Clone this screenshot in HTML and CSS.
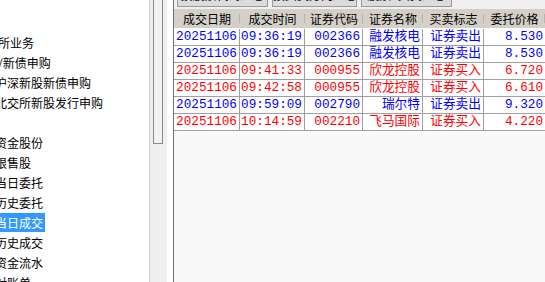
FILE: index.html
```html
<!DOCTYPE html>
<html lang="zh-CN">
<head>
<meta charset="UTF-8" />
<title>当日成交</title>
<link rel="stylesheet" href="styles.css">
</head>
<body>
<div class="app">
  <div class="nav">
    <div class="tree">
      <div class="node">北交所业务</div>
      <div class="node">新股/新债申购</div>
      <div class="node child">沪深新股新债申购</div>
      <div class="node child">北交所新股发行申购</div>
      <div class="node child"></div>
      <div class="node child">资金股份</div>
      <div class="node child">限售股</div>
      <div class="node child">当日委托</div>
      <div class="node child">历史委托</div>
      <div class="node child"><span class="selected">当日成交</span></div>
      <div class="node child">历史成交</div>
      <div class="node child">资金流水</div>
      <div class="node child">对账单</div>
    </div>
    <div class="vscroll"><div class="thumb"></div></div>
  </div>
  <div class="gap"></div>
  <div class="main">
    <div class="toolbar">
      <button class="tb-btn w91">按股票代码汇总</button>
      <button class="tb-btn w85">按买卖方向汇总</button>
      <button class="tb-btn w91">股票+买卖汇总</button>
    </div>
    <table class="grid">
      <colgroup>
        <col style="width:66px"><col style="width:65px"><col style="width:58px">
        <col style="width:60px"><col style="width:61px"><col style="width:61px">
      </colgroup>
      <thead>
        <tr>
          <th>成交日期</th>
          <th>成交时间</th>
          <th>证券代码</th>
          <th>证券名称</th>
          <th>买卖标志</th>
          <th>委托价格</th>
        </tr>
      </thead>
      <tbody id="tradeBody"></tbody>
    </table>
  </div>
</div>

<script>
  const trades = [
    ['20251106', '09:36:19', '002366', '融发核电', '证券卖出', '8.530'],
    ['20251106', '09:36:19', '002366', '融发核电', '证券卖出', '8.530'],
    ['20251106', '09:41:33', '000955', '欣龙控股', '证券买入', '6.720'],
    ['20251106', '09:42:58', '000955', '欣龙控股', '证券买入', '6.610'],
    ['20251106', '09:59:09', '002790', '瑞尔特', '证券卖出', '9.320'],
    ['20251106', '10:14:59', '002210', '飞马国际', '证券买入', '4.220']
  ];
  const body = document.getElementById('tradeBody');
  trades.forEach(t => {
    const cls = t[4] === '证券买入' ? 'buy' : 'sell';
    body.insertAdjacentHTML('beforeend',
      `<tr class="${cls}">${t.map(v => `<td>${v}</td>`).join('')}</tr>`);
  });
</script>
</body>
</html>
```

FILE: styles.css
```css
html, body {
  margin: 0;
  height: 100%;
  overflow: hidden;
  background: #fff;
}
.app {
  display: flex;
  height: 282px;
  font-family: "Noto Sans CJK SC", sans-serif;
  font-size: 12px;
}
.nav {
  display: flex;
  width: 167px;
  flex-shrink: 0;
}
.tree {
  width: 149px;
  overflow: hidden;
  background: #fff;
  padding-top: 33px;
  box-sizing: border-box;
}
.node {
  height: 20px;
  line-height: 20px;
  margin-left: -26px;
  white-space: nowrap;
  color: #000;
}
.node.child {
  margin-left: -5px;
}
.selected {
  display: inline-block;
  height: 19px;
  line-height: 19px;
  background: #3399ff;
  color: #fff;
  padding-right: 2px;
}
.vscroll {
  width: 18px;
  border-left: 1px solid #d0d0d0;
  background: #f0efee;
  box-sizing: border-box;
}
.thumb {
  margin-left: 3px;
  width: 10px;
  height: 144px;
  border: 1px solid #8a8a8a;
  border-top: none;
  background: #f3f3f3;
  box-sizing: border-box;
}
.gap {
  width: 6px;
  background: #fff;
}
.main {
  flex: 1;
  border-left: 1px solid #707070;
  background: #f9f9f9;
  overflow: hidden;
}
.toolbar {
  height: 9px;
  display: flex;
  gap: 4px;
  padding-left: 3px;
  background: #f0f0f0;
  align-items: flex-end;
  overflow: hidden;
}
.tb-btn {
  height: 20px;
  margin-bottom: 2px;
  padding: 0 0 5px;
  border: 1px solid #9a9a9a;
  background: #dcdcdc;
  font-family: "Noto Sans CJK SC", sans-serif;
  font-size: 12px;
  line-height: 12px;
  color: #000;
  flex-shrink: 0;
  overflow: hidden;
  white-space: nowrap;
}
.w91 { width: 91px; }
.w85 { width: 85px; }
.grid {
  table-layout: fixed;
  border-collapse: separate;
  border-spacing: 0;
  width: 371px;
}
.grid th {
  height: 19px;
  padding: 0;
  background: #d4d0c8;
  border-bottom: 1px solid #fff;
  font-weight: normal;
  text-align: center;
  color: #000;
  position: relative;
  white-space: nowrap;
}
.grid th::after {
  content: "";
  position: absolute;
  right: 0;
  top: 5px;
  height: 9px;
  border-right: 1px solid #b8b4ac;
}
.grid td {
  height: 16px;
  padding: 0 2px 0 0;
  line-height: 16px;
  border-right: 1px solid #a0a0a0;
  border-bottom: 1px solid #a0a0a0;
  background: #fff;
  text-align: right;
  white-space: nowrap;
  overflow: hidden;
  font-family: "Liberation Mono", "Noto Sans CJK SC", monospace;
  font-size: 12.7px;
}
.grid td:last-child {
  border-right: none;
}
.grid tr.sell td { color: #0000ff; }
.grid tr.buy td { color: #ff0000; }
```
